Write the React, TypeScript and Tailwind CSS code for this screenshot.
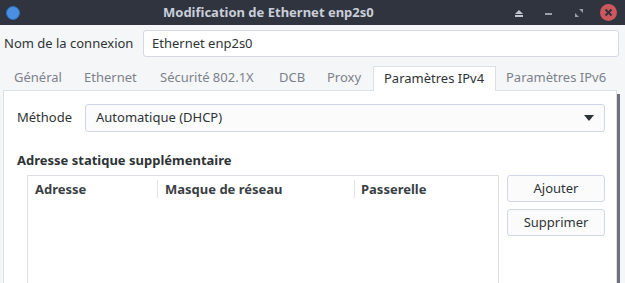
const tabs: [string, number][] = [
  ["Général", 70],
  ["Ethernet", 76],
  ["Sécurité 802.1X", 119],
  ["DCB", 48],
  ["Proxy", 56],
  ["Paramètres IPv4", 123],
  ["Paramètres IPv6", 120],
];
const active = "Paramètres IPv4";

function TitleBar() {
  return (
    <div className="flex items-center h-[25px] bg-[#2f343f] shrink-0 pl-[6px] pr-[8px]">
      <div className="w-[14px] h-[14px] rounded-full bg-[#4a90e2] border border-[#2f6fc0] shrink-0" />
      <div className="ml-[143px] text-[13px] font-bold text-[#c9ced8] whitespace-nowrap">
        Modification de Ethernet enp2s0
      </div>
      <div className="flex-1" />
      <svg width="14" height="14" viewBox="0 0 14 14" className="mr-[16px]">
        <path d="M3 8 L7 4 L11 8 Z" fill="#c0c5ce" />
        <rect x="3" y="9" width="8" height="2" fill="#c0c5ce" />
      </svg>
      <svg width="14" height="14" viewBox="0 0 14 14" className="mr-[16px]">
        <rect x="3" y="7" width="7" height="2" fill="#9aa0ab" />
      </svg>
      <svg width="14" height="14" viewBox="0 0 14 14" className="mr-[14px]">
        <path d="M7 3 L11 3 L11 7 Z" fill="#9aa0ab" />
        <path d="M3 7 L3 11 L7 11 Z" fill="#9aa0ab" />
      </svg>
      <div className="w-[17px] h-[17px] rounded-full bg-[#cc575d] flex items-center justify-center">
        <svg width="9" height="9" viewBox="0 0 9 9">
          <path d="M1.5 1.5 L7.5 7.5 M7.5 1.5 L1.5 7.5" stroke="#2f343f" strokeWidth="2" />
        </svg>
      </div>
    </div>
  );
}

export default function App() {
  return (
    <div
      className="w-[625px] h-[283px] overflow-hidden flex flex-col bg-[#f5f6f7] text-[13px] text-[#2e3436]"
      style={{ fontFamily: '"Noto Sans", "Open Sans", sans-serif' }}
    >
      <TitleBar />

      <div className="flex items-center h-[27px] mt-[5px] pl-[4px] pr-[6px] shrink-0">
        <span className="w-[139px]">Nom de la connexion</span>
        <div className="flex-1 h-full flex items-center px-[8px] bg-white border border-[#d3d8e2] rounded-[3px]">
          Ethernet enp2s0
        </div>
      </div>

      <div className="flex items-end h-[25px] mt-[8px] pl-[4px] shrink-0">
        {tabs.map(([t, w]) =>
          t === active ? (
            <div
              key={t}
              style={{ width: w }}
              className="h-[25px] shrink-0 pl-[10px] flex items-center bg-white border border-b-0 border-[#dcdfe3] text-[#2e3436] relative z-10 -mb-px pb-px"
            >
              {t}
            </div>
          ) : (
            <div key={t} style={{ width: w }} className="h-[25px] shrink-0 pl-[10px] flex items-center text-[#7c818c] whitespace-nowrap">
              {t}
            </div>
          )
        )}
      </div>

      <div className="flex-1 flex">
        <div className="flex-1 ml-[3px] bg-white border border-[#dcdfe3] border-b-0 pl-[13px] pr-[11px] pt-[12px] flex flex-col">
          <div className="flex items-center h-[28px] mt-[1px]">
            <span className="w-[68px]">Méthode</span>
            <div className="flex-1 h-full flex items-center justify-between pl-[10px] pr-[10px] bg-[#fbfbfc] border border-[#cfd6e6] rounded-[3px]">
              <span>Automatique (DHCP)</span>
              <svg width="10" height="6" viewBox="0 0 10 6">
                <path d="M0 0 L10 0 L5 6 Z" fill="#2e3436" />
              </svg>
            </div>
          </div>

          <div className="font-bold mt-[18px] leading-[20px]">Adresse statique supplémentaire</div>

          <div className="flex gap-[8px] mt-[5px] pl-[10px] flex-1">
            <div className="flex-1 bg-white border border-[#dcdfe3] border-b-0">
              <div className="flex items-center h-[25px] font-bold text-[#3a3f45]">
                <div className="w-[130px] pl-[7px] border-r border-[#e2e4e8] h-[18px] leading-[18px]">Adresse</div>
                <div className="w-[197px] pl-[7px] border-r border-[#e2e4e8] h-[18px] leading-[18px]">Masque de réseau</div>
                <div className="flex-1 pl-[6px] h-[18px] leading-[18px]">Passerelle</div>
              </div>
            </div>
            <div className="w-[98px] flex flex-col gap-[7px]">
              <button className="h-[27px] bg-[#fbfbfc] border border-[#cfd6e6] rounded-[3px]">Ajouter</button>
              <button className="h-[27px] bg-[#fbfbfc] border border-[#cfd6e6] rounded-[3px]">Supprimer</button>
            </div>
          </div>
        </div>
        <div className="w-[3px] mt-[4px] bg-[#6b707a]" />
        <div className="w-[5px]" />
      </div>
    </div>
  );
}
